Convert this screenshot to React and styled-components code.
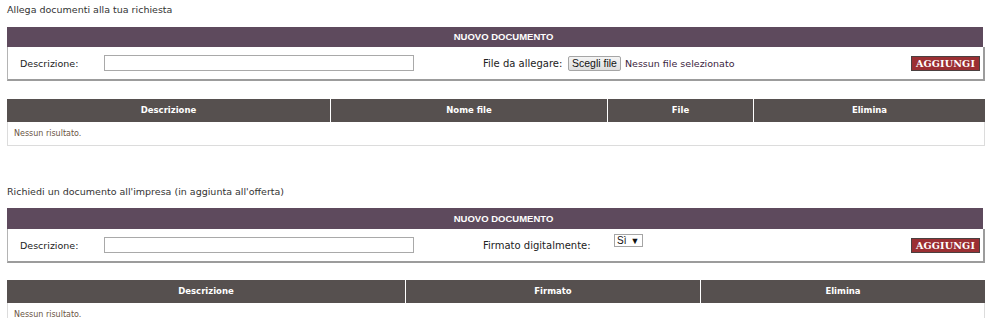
import React from 'react';
import styled, { createGlobalStyle } from 'styled-components';

const GlobalStyle = createGlobalStyle`
  body {
    margin: 0;
    background: #ffffff;
    font-family: "DejaVu Sans", Verdana, sans-serif;
    color: #333333;
  }
`;

const Page = styled.div`
  padding: 3px 9px 0 7px;
`;

const Section = styled.section`
  margin-bottom: ${(p) => p.$gap || 0}px;
`;

const Title = styled.div`
  font-size: 9.5px;
  line-height: 14px;
  height: 14px;
  margin-bottom: ${(p) => p.$space}px;
  color: #333;
`;

const Panel = styled.div`
  width: 978px;
`;

const PanelHeader = styled.div`
  height: ${(p) => p.$h}px;
  line-height: ${(p) => p.$h}px;
  margin-right: 2px;
  padding-left: 17px;
  background: #5e4a5d;
  color: #fff;
  text-align: center;
  font-family: "Liberation Sans", Arial, sans-serif;
  font-weight: bold;
  font-size: 9.5px;
`;

const PanelBody = styled.div`
  height: 32px;
  border-left: 1px solid #b4b4b4;
  border-right: 2px solid #9c9c9c;
  border-bottom: 2px solid #9c9c9c;
  display: grid;
  grid-template-columns: 84px 310px 69px auto 1fr auto;
  align-items: center;
  padding: 0 3px 0 12px;
`;

const Label = styled.span`
  font-size: 9.5px;
  color: #222;
`;

const TextInput = styled.div`
  height: 14px;
  border: 1px solid #a9a9a9;
  background: #fff;
`;

const FieldLabel = styled.span`
  grid-column: 4;
  font-size: 10px;
  color: #222;
  width: 85px;
  white-space: nowrap;
`;

const FieldBox = styled.div`
  display: flex;
  align-items: center;
  gap: 4px;
  margin-top: ${(p) => p.$top || 0}px;
  padding-left: ${(p) => p.$indent || 0}px;
`;

const FileButton = styled.span`
  display: inline-block;
  height: 13px;
  line-height: 13px;
  padding: 0 3px;
  border: 1px solid #a5a5a5;
  border-radius: 2px;
  background: linear-gradient(#f4f4f4, #dedede);
  font-family: "Liberation Sans", Arial, sans-serif;
  font-size: 10.5px;
  color: #111;
`;

const FileName = styled.span`
  font-size: 9.5px;
  color: #3b2440;
`;

const Select = styled.span`
  display: inline-flex;
  align-items: center;
  gap: 4px;
  height: 11px;
  padding: 0 3px 0 2px;
  border: 1px solid #a5a5a5;
  font-family: "Liberation Sans", Arial, sans-serif;
  font-size: 10px;
  color: #111;
  background: #fff;
`;

const Caret = styled.span`
  font-size: 9px;
`;

const AddButton = styled.span`
  grid-column: 6;
  display: inline-block;
  height: 13px;
  line-height: 13px;
  width: 67px;
  text-align: center;
  background: #9b2f33;
  border: 1px solid #4a4040;
  color: #fff;
  font-family: "DejaVu Serif", Georgia, serif;
  font-weight: bold;
  font-size: 9.5px;
  letter-spacing: 0.2px;
`;

const Table = styled.div`
  width: 978px;
  margin-top: ${(p) => p.$top}px;
`;

const HeadRow = styled.div`
  display: grid;
  grid-template-columns: ${(p) => p.$cols};
  height: 23px;
  background: #56504f;
`;

const HeadCell = styled.div`
  line-height: 23px;
  text-align: center;
  color: #fff;
  font-size: 8.5px;
  font-weight: bold;
  border-left: ${(p) => (p.$first ? 'none' : '1px solid #ffffff')};
`;

const EmptyRow = styled.div`
  height: 23px;
  line-height: 23px;
  padding-left: 6px;
  border: 1px solid #dcdcdc;
  border-top: none;
  font-size: 8px;
  color: #6b5544;
`;

const TableBlock = ({ top, cols, headers }) => (
  <Table $top={top}>
    <HeadRow $cols={cols}>
      {headers.map((h, i) => (
        <HeadCell key={h} $first={i === 0}>{h}</HeadCell>
      ))}
    </HeadRow>
    <EmptyRow>Nessun risultato.</EmptyRow>
  </Table>
);

export default function App() {
  return (
    <>
      <GlobalStyle />
      <Page>
        <Section $gap={39}>
          <Title $space={10}>Allega documenti alla tua richiesta</Title>
          <Panel>
            <PanelHeader $h={20}>NUOVO DOCUMENTO</PanelHeader>
            <PanelBody>
              <Label>Descrizione:</Label>
              <TextInput />
              <FieldLabel>File da allegare:</FieldLabel>
              <FieldBox>
                <FileButton>Scegli file</FileButton>
                <FileName>Nessun file selezionato</FileName>
              </FieldBox>
              <AddButton>AGGIUNGI</AddButton>
            </PanelBody>
          </Panel>
          <TableBlock
            top={18}
            cols="323px 277px 146px 1fr"
            headers={['Descrizione', 'Nome file', 'File', 'Elimina']}
          />
        </Section>
        <Section>
          <Title $space={9}>Richiedi un documento all'impresa (in aggiunta all'offerta)</Title>
          <Panel>
            <PanelHeader $h={21}>NUOVO DOCUMENTO</PanelHeader>
            <PanelBody>
              <Label>Descrizione:</Label>
              <TextInput />
              <FieldLabel>Firmato digitalmente:</FieldLabel>
              <FieldBox $top={-9} $indent={46}>
                <Select>Sì <Caret>▼</Caret></Select>
              </FieldBox>
              <AddButton>AGGIUNGI</AddButton>
            </PanelBody>
          </Panel>
          <TableBlock
            top={17}
            cols="398px 295px 1fr"
            headers={['Descrizione', 'Firmato', 'Elimina']}
          />
        </Section>
      </Page>
    </>
  );
}
